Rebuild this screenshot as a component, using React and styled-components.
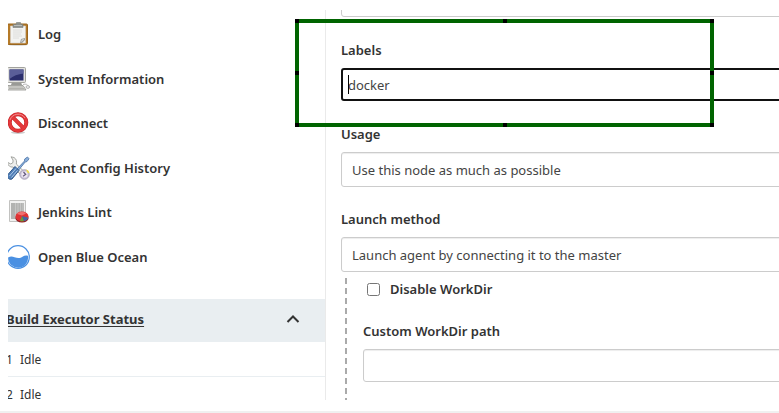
import React from "react";
import styled, { createGlobalStyle } from "styled-components";

const GlobalStyle = createGlobalStyle`
  *, *::before, *::after { box-sizing: border-box; }
  body {
    margin: 0;
    background: #fff;
    color: #333;
    font-family: "Noto Sans", "Open Sans", sans-serif;
    font-size: 13px;
    line-height: 20px;
  }
`;

const Page = styled.div`
  display: flex;
  flex-direction: column;
  height: 100vh;
  padding: 10px 0 0 8px;
  overflow: hidden;
`;

const Content = styled.div`
  display: flex;
  flex: 1;
  min-height: 0;
  overflow: hidden;
`;

const PageFooter = styled.footer`
  flex: none;
  height: 2px;
  margin: 11px 0 0 -8px;
  background: #f0f0f0;
`;

const Sidebar = styled.aside`
  flex: none;
  width: 320px;
  margin-left: -2px;
  border-right: 1px solid #eaeaea;
`;

const Tasks = styled.nav`
  display: grid;
  grid-auto-rows: 1fr;
  height: 269px;
  padding-top: 2px;
`;

const TaskLink = styled.a`
  display: flex;
  align-items: center;
  gap: 8px;
  color: #333;
  font-weight: 600;
  text-decoration: none;

  svg { flex: none; }
`;

const PaneHeader = styled.div`
  display: flex;
  align-items: center;
  justify-content: space-between;
  height: 43px;
  margin-top: 20px;
  padding: 0 24px 3px 0;
  background: #e9eef1;
`;

const PaneTitle = styled.a`
  color: #333;
  font-weight: 700;
  text-underline-offset: 2px;
`;

const CollapseButton = styled.button`
  display: flex;
  padding: 0;
  border: 0;
  background: none;
  color: #333;
`;

const Executors = styled.table`
  width: 100%;
  border-spacing: 0;
  font-size: 12px;
`;

const ExecutorCell = styled.td`
  width: ${(p) => (p.$number ? "14px" : "auto")};
  height: 35px;
  padding: 2px 0 0;
  border-bottom: 1px solid #e9eef1;
`;

const ConfigForm = styled.form`
  flex: 1;
  min-width: 0;
  margin: -26px -12px 0 0;
  padding-left: 15px;
`;

const Field = styled.div`
  position: relative;
  display: flex;
  flex-direction: column;
  gap: 8px;
  margin-top: ${(p) => p.$space}px;
`;

const Label = styled.label`
  align-self: flex-start;
  font-weight: 600;
`;

const TextInput = styled.input`
  display: block;
  width: 100%;
  height: 33px;
  padding: 0 5px;
  border: ${(p) => (p.$active ? "2px solid #111" : "1px solid #ccc")};
  border-radius: 3px;
  outline: none;
  background: #fff;
  box-shadow: ${(p) => (p.$active ? "none" : "inset 0 1px 1px rgba(0, 0, 0, 0.075)")};
  color: #444;
  font: inherit;
`;

const SelectInput = styled.select`
  width: 100%;
  height: 35px;
  padding: 0 10px;
  border: 1px solid #ccc;
  border-radius: 3px;
  appearance: none;
  background: #fff;
  box-shadow: inset 0 1px 1px rgba(0, 0, 0, 0.075);
  color: #444;
  font: inherit;
`;

const Caret = styled.span`
  position: absolute;
  bottom: 7px;
  left: 7px;
  width: 1px;
  height: 19px;
  background: #000;
`;

const green = "linear-gradient(#006400, #006400)";
const black = "linear-gradient(#000, #000)";

const Highlight = styled.div`
  position: absolute;
  top: -21px;
  left: -46px;
  width: 419px;
  height: 108px;
  pointer-events: none;
  background:
    ${black} left top / 4px 4px,
    ${black} center top / 4px 4px,
    ${black} right top / 4px 4px,
    ${black} left center / 4px 4px,
    ${black} right center / 4px 4px,
    ${black} left bottom / 4px 4px,
    ${black} center bottom / 4px 4px,
    ${black} right bottom / 4px 4px,
    ${green} top / 100% 4px,
    ${green} bottom / 100% 4px,
    ${green} left / 4px 100%,
    ${green} right / 4px 100%;
  background-repeat: no-repeat;
`;

const Nested = styled.div`
  margin: 6px 0 0 4px;
  padding: 1px 0 60px 18px;
  background: repeating-linear-gradient(#aaa 0 6px, transparent 6px 10px) left / 2px 100% no-repeat;
`;

const CheckRow = styled.div`
  display: flex;
  align-items: center;
  gap: 10px;
  padding-left: 4px;
`;

const Checkbox = styled.input`
  width: 13px;
  height: 13px;
  margin: 0;
`;

const iconProps = { width: 24, height: 24, viewBox: "0 0 24 24", "aria-hidden": true };

const ClipboardIcon = () => (
  <svg {...iconProps}>
    <ellipse cx="12" cy="23" rx="9" ry="1" fill="#ddd" />
    <rect x="1.5" y="2" width="20" height="20.5" rx="1" fill="#b57a28" stroke="#9a661f" />
    <path d="M4.5 4h15v17h-15z" fill="#f3f3f1" stroke="#d4d2cc" strokeWidth=".6" />
    <path d="M7 8h9M7 10h9M7 12h8M7 14h9M7 16h6" stroke="#dededc" />
    <path d="M14 21l1-4 4-1v2l-3 3z" fill="#9b9d9b" />
    <path d="M15 20.5l.7-3 3-.7z" fill="#d4d6d4" />
    <path d="M7 5.500V2.500h3l.5-2h4l.5 2h2v3z" fill="#8d918d" stroke="#7c7f7c" strokeWidth=".6" />
    <path d="M8 3.500h8" stroke="#b9bcb9" />
  </svg>
);

const ComputerIcon = () => (
  <svg {...iconProps}>
    <path d="M6 15h9l1 3H5z" fill="#999a96" />
    <rect x="1.500" y=".5" width="18" height="15" rx="1" fill="#e2e2de" stroke="#a2a29d" />
    <path d="M3.500 2.500h14v11h-14z" fill="#2b2e6c" />
    <path d="M3.500 2.500h14v4C12 7 7 9 3.500 12z" fill="#5a5e98" />
    <path d="M2 18.500h15l3 4.500H1z" fill="#d6d6d2" stroke="#92928d" strokeWidth=".8" />
    <path d="M3 20h14M3 21.500h15" stroke="#b2b2ad" />
    <path d="M17 17.500c3-1 5 0 5 2" fill="none" stroke="#bbb" />
    <ellipse cx="21.800" cy="20" rx="1.800" ry="1.400" fill="#eee" stroke="#999" strokeWidth=".7" />
  </svg>
);

const StopIcon = () => (
  <svg {...iconProps}>
    <ellipse cx="12" cy="21.500" rx="7" ry="1.500" fill="#ccc" />
    <circle cx="12" cy="11.500" r="8" fill="#fff" />
    <g fill="none" stroke="#c8282b" strokeWidth="4">
      <circle cx="12" cy="11.500" r="8.300" />
      <path d="M6.200 5.700l11.600 11.600" />
    </g>
    <g fill="none" stroke="#e5393c" strokeWidth="2.800">
      <circle cx="12" cy="11.500" r="8.300" />
      <path d="M6.200 5.700l11.600 11.600" />
    </g>
    <path d="M4 9a8.400 8.400 0 0 1 15-2" fill="none" stroke="#f08c8d" />
  </svg>
);

const ToolsIcon = () => (
  <svg {...iconProps}>
    <path
      d="M5 .8l3 .7C10.500 3 11 5.500 10.300 8l9.200 9-3 3.500-9.500-9.500C4.500 11.500 1.500 9.500 1.800 6.500l3 1.500L7 6.500V4z"
      fill="#eeeeec" stroke="#9b9d99" strokeWidth=".9"
    />
    <path d="M11 13l7.500-8 .2-2L21.500 1 23 2.800 21 5.500l-1.800.5-6.500 8z" fill="#8cb0db" stroke="#527bad" strokeWidth=".9" />
    <path d="M1.500 19L9 10.500l4 4L6 23c-2.500 1.300-5.500-1.500-4.500-4z" fill="#4f7db6" stroke="#31598b" />
    <path d="M3.500 20l6.500-7.500M5.500 21.500l6-7" stroke="#b5d1ee" strokeWidth=".9" />
    <circle cx="18.500" cy="18.500" r="4.700" fill="#cfc8dc" stroke="#a79fb6" />
    <circle cx="18.500" cy="18.500" r="3" fill="#eee8f3" />
    <path d="M17.500 16l2.200 2.500-2.700 1.800" fill="none" stroke="#66597c" strokeWidth="1.200" />
    <path d="M20 13.500c2 .3 3.300 1.700 3.300 4l-2-1z" fill="#f2df45" />
  </svg>
);

const ReportIcon = () => (
  <svg {...iconProps}>
    <path d="M3.500.5h16v21h-16z" fill="#f1f1f0" stroke="#c2c2c0" />
    <path d="M5 3h13v16H5z" fill="#b2b3b1" />
    <path d="M9.500 3v15M12 3v15M14.500 3v12M17 3v11" stroke="#c6c6c5" />
    <ellipse cx="16" cy="18" rx="6.600" ry="4.500" fill="#8f1f21" />
    <ellipse cx="16" cy="16.500" rx="6.500" ry="5" fill="#df3334" />
    <path d="M11 14c2-2.500 7-2.500 9-.5l-4 2z" fill="#f0706f" />
    <path d="M16 16l-2 5.200h4z" fill="#63a338" />
    <path d="M16 16l2 5.200c3-.7 4-2 4.200-3.500z" fill="#3f67a4" />
  </svg>
);

const OceanIcon = () => (
  <svg {...iconProps}>
    <circle cx="12" cy="12" r="11.300" fill="#fff" stroke="#4a90e2" strokeWidth="1.200" />
    <path d="M2.100 12.500c2.400-1.300 4.400-1 6.400-.2 3.500 1.200 6 1 8-.6 1.800-1.300 3.500-1.600 5.400-1A10 10 0 1 1 2.100 12.500z" fill="#4a90e2" />
  </svg>
);

const tasks = [
  { name: "Log", Icon: ClipboardIcon },
  { name: "System Information", Icon: ComputerIcon },
  { name: "Disconnect", Icon: StopIcon },
  { name: "Agent Config History", Icon: ToolsIcon },
  { name: "Jenkins Lint", Icon: ReportIcon },
  { name: "Open Blue Ocean", Icon: OceanIcon },
];

export default function App() {
  return (
    <Page>
      <GlobalStyle />
      <Content>
        <Sidebar>
          <Tasks>
            {tasks.map(({ name, Icon }) => (
              <TaskLink href="#" key={name}>
                <Icon />
                {name}
              </TaskLink>
            ))}
          </Tasks>
          <PaneHeader>
            <PaneTitle href="#">Build Executor Status</PaneTitle>
            <CollapseButton type="button" aria-label="Collapse">
              <svg width="16" height="16" viewBox="0 0 16 16" fill="none" stroke="currentColor" strokeWidth="2">
                <path d="M2.500 11L8 5.500l5.500 5.500" />
              </svg>
            </CollapseButton>
          </PaneHeader>
          <Executors>
            <tbody>
              {[1, 2].map((n) => (
                <tr key={n}>
                  <ExecutorCell $number>{n}</ExecutorCell>
                  <ExecutorCell>Idle</ExecutorCell>
                </tr>
              ))}
            </tbody>
          </Executors>
        </Sidebar>
        <ConfigForm>
          <TextInput aria-label="Remote root directory" />
          <Field $space={23}>
            <Label htmlFor="labels">Labels</Label>
            <TextInput id="labels" $active defaultValue="docker" />
            <Caret />
            <Highlight />
          </Field>
          <Field $space={23}>
            <Label htmlFor="usage">Usage</Label>
            <SelectInput id="usage">
              <option>Use this node as much as possible</option>
            </SelectInput>
          </Field>
          <Field $space={22}>
            <Label htmlFor="launch">Launch method</Label>
            <SelectInput id="launch">
              <option>Launch agent by connecting it to the master</option>
            </SelectInput>
          </Field>
          <Nested>
            <CheckRow>
              <Checkbox type="checkbox" id="disable" />
              <Label htmlFor="disable">Disable WorkDir</Label>
            </CheckRow>
            <Field $space={22}>
              <Label htmlFor="workdir">Custom WorkDir path</Label>
              <TextInput id="workdir" />
            </Field>
          </Nested>
        </ConfigForm>
      </Content>
      <PageFooter />
    </Page>
  );
}
